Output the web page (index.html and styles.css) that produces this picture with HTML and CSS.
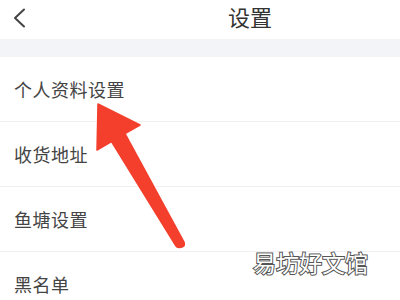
FILE: index.html
```html
<!DOCTYPE html>
<html lang="zh-CN">

<head>
  <meta charset="UTF-8">
  <meta name="viewport" content="width=device-width, initial-scale=1.0">
  <title>设置</title>
  <link rel="stylesheet" href="styles.css">
</head>

<body>
  <div class="page">
    <header class="top-bar">
      <a class="back-btn" href="#">
        <svg width="14" height="20" viewBox="0 0 14 20"><path d="M12 1.5 L3 10 L12 18.5" fill="none" stroke="#444" stroke-width="2" stroke-linecap="round" stroke-linejoin="round"/></svg>
      </a>
      <h1 class="title">设置</h1>
    </header>
    <div class="gap"></div>

    <ul class="menu">
      <li>个人资料设置</li>
      <li>收货地址</li>
      <li>鱼塘设置</li>
      <li>黑名单</li>
    </ul>

    <!-- 빨간 화살표 -->
    <svg class="arrow" width="400" height="300" viewBox="0 0 400 300">
      <path d="M98 104 L140 125 L125 133.5 L184 242 Q186 247 180 247.5 Q177 247.5 176 246 L111.5 141.5 L97 150 Z" fill="#f33f2c" stroke="#f33f2c" stroke-width="1.5" stroke-linejoin="round"/>
    </svg>

    <div class="watermark">易坊好文馆</div>
  </div>
</body>

</html>
```

FILE: styles.css
```css
*{margin: 0; padding: 0; box-sizing: border-box;}
a{text-decoration: 0;}
ul{list-style: none;}
body{
  background-color: #fff;
  font-family: "Noto Sans CJK SC", "Noto Sans", sans-serif;
  color: #3a3a3a;
}

.page{
  width: 400px;
  height: 300px;
  position: relative;
  overflow: hidden;
}

/*헤더*/
.top-bar{
  height: 39px;
  display: flex;
  align-items: center;
  padding-left: 12px;
}
.back-btn{
  display: flex;
  width: 14px;
  height: 20px;
  margin-top: -4px;
}
.title{
  margin-left: 202px;
  font-size: 22px;
  font-weight: normal;
  line-height: 1;
  color: #333;
  margin-top: -7px;
}
.gap{
  height: 18px;
  background: #f3f4f7;
}

/*메뉴*/
.menu li{
  height: 65px;
  display: flex;
  align-items: center;
  padding-left: 14px;
  font-size: 18px;
  letter-spacing: 0.5px;
  color: #444;
  border-bottom: 1px solid #f0f0f2;
}

.arrow{
  position: absolute;
  left: 0;
  top: 0;
}
.watermark{
  position: absolute;
  left: 253px;
  top: 251px;
  font-size: 23px;
  line-height: 1;
  color: #fff;
  -webkit-text-stroke: 2px #555;
  paint-order: stroke fill;
}
```
